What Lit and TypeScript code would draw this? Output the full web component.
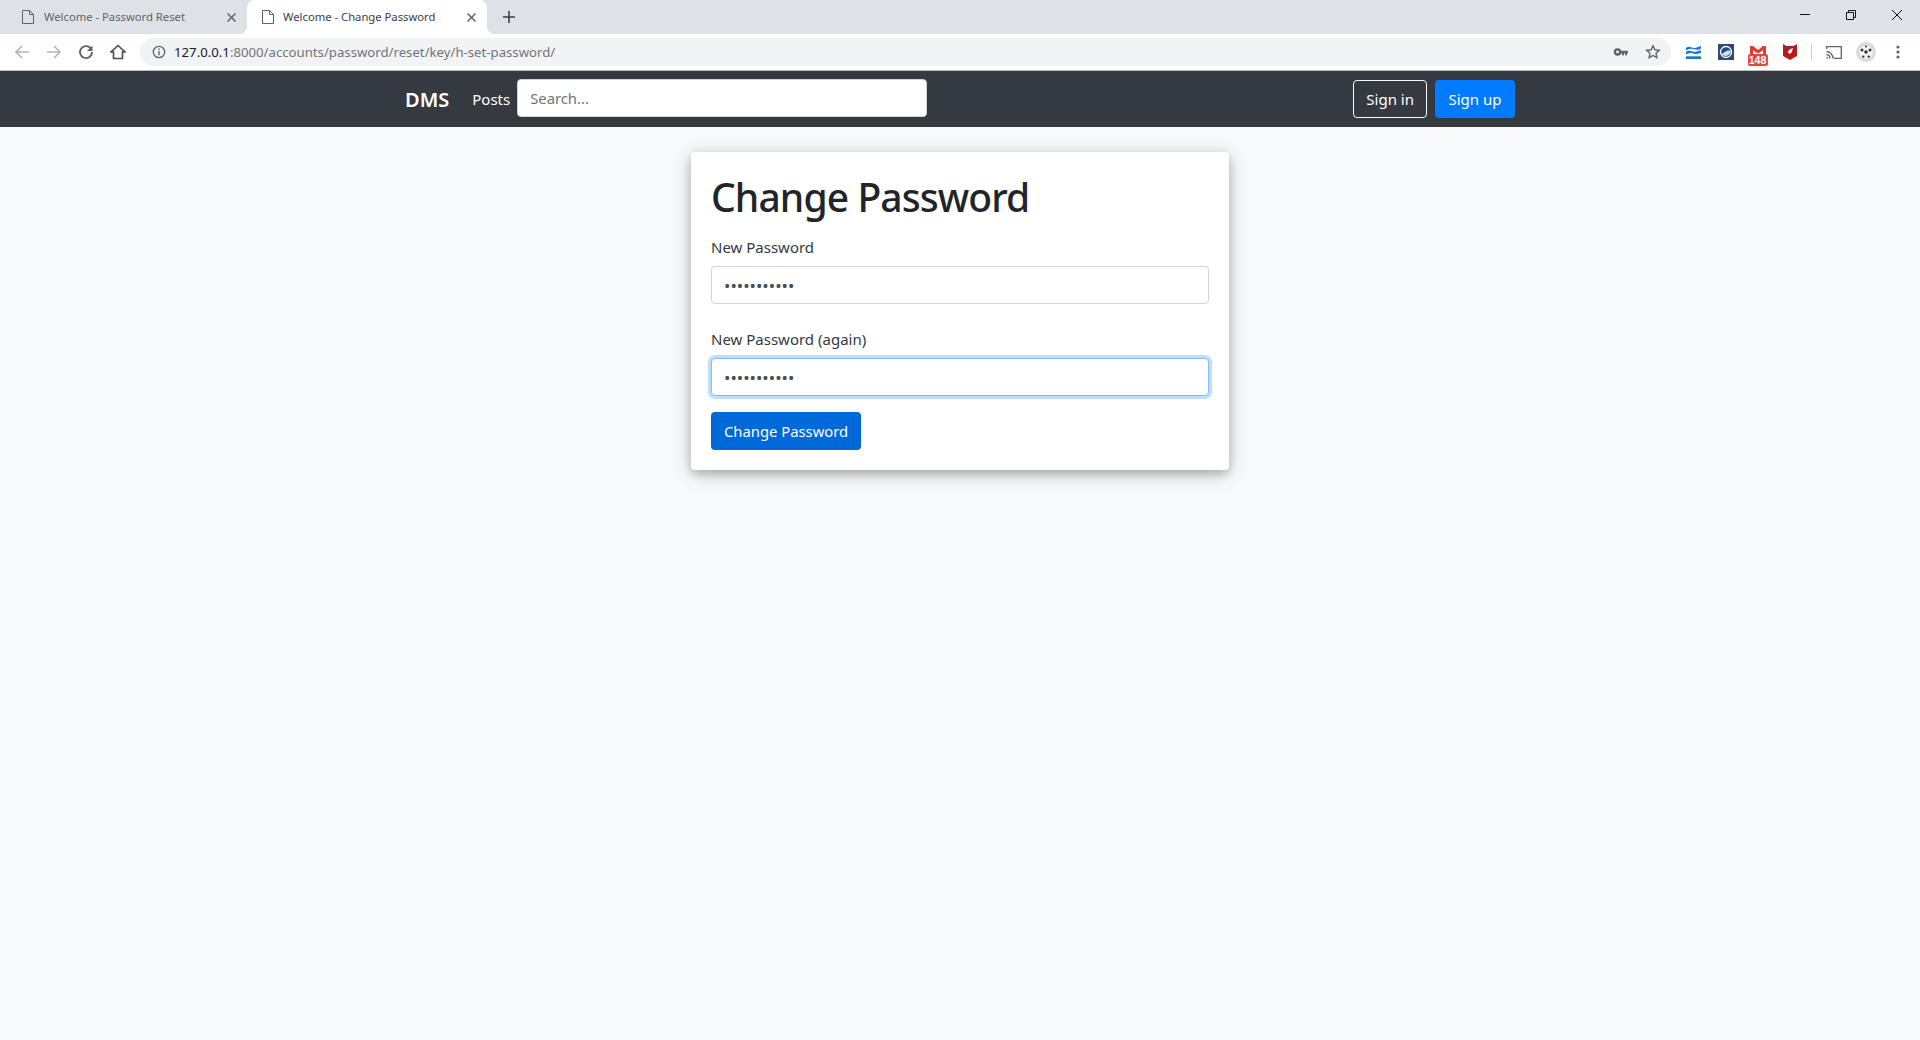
import { LitElement, html, css } from 'lit';
import { customElement } from 'lit/decorators.js';

const pageIcon = html`<svg class="page-icon" width="12" height="14" viewBox="0 0 12 14" fill="none" stroke="#5f6368" stroke-width="1"><path d="M.5.5h7l4 4v9h-11z"/><path d="M7.5.5v4h4"/></svg>`;
const closeIcon = html`<svg class="close-icon" width="9" height="9" viewBox="0 0 9 9" stroke="#5f6368" stroke-width="1.5"><path d="M.5.5l8 8M8.5.5l-8 8"/></svg>`;

@customElement('browser-chrome')
class BrowserChrome extends LitElement {
  static styles = css`
    :host {
      display: block;
      font-family: 'Noto Sans', 'Open Sans', sans-serif;
    }
    .strip {
      height: 34px;
      background: #dee1e6;
      display: flex;
      align-items: stretch;
    }
    .tab {
      width: 240px;
      display: flex;
      align-items: center;
      padding: 0 11px 0 15px;
      box-sizing: border-box;
      font-size: 11.25px;
      color: #5f6368;
      border-radius: 8px 8px 0 0;
      position: relative;
    }
    .tab.first {
      width: 247px;
      padding-left: 22px;
    }
    .tab.active {
      background: #fff;
      color: #3c4043;
    }
    .tab.active::before,
    .tab.active::after {
      content: '';
      position: absolute;
      bottom: 0;
      width: 8px;
      height: 8px;
    }
    .tab.active::before {
      left: -8px;
      background: radial-gradient(circle at 0 0, transparent 8px, #fff 8.5px);
    }
    .tab.active::after {
      right: -8px;
      background: radial-gradient(circle at 100% 0, transparent 8px, #fff 8.5px);
    }
    .tab .title {
      flex: 1;
      margin-left: 10px;
      white-space: nowrap;
    }
    .tab.active .title {
      margin-left: 9px;
    }
    .plus {
      margin-left: 16px;
      align-self: center;
      display: flex;
    }
    .spacer {
      flex: 1;
    }
    .win {
      width: 46px;
      display: flex;
      justify-content: center;
      padding-top: 9px;
      box-sizing: border-box;
    }
    .toolbar {
      height: 37px;
      background: #fff;
      border-bottom: 1px solid #b8babd;
      box-sizing: border-box;
      display: flex;
      align-items: center;
    }
    .nav-btn {
      width: 32px;
      display: flex;
      justify-content: center;
    }
    .nav-btns {
      display: flex;
      width: 140px;
      padding-left: 6px;
      box-sizing: border-box;
    }
    .omni {
      width: 1531px;
      height: 28px;
      border-radius: 14px;
      background: #f1f3f4;
      display: flex;
      align-items: center;
      padding: 0 10px 0 12px;
      box-sizing: border-box;
      font-size: 13.2px;
    }
    .url {
      margin-left: 8px;
      flex: 1;
      color: #70757a;
      white-space: nowrap;
    }
    .url b {
      font-weight: 400;
      color: #202124;
    }
    .omni .star {
      margin-left: 16px;
    }
    .exts {
      flex: 1;
      display: flex;
      align-items: center;
      padding-left: 6.5px;
    }
    .ext {
      width: 32px;
      height: 28px;
      display: flex;
      justify-content: center;
      align-items: center;
      position: relative;
    }
    .gmail {
      margin-bottom: 4px;
    }
    .badge {
      position: absolute;
      left: 6px;
      bottom: 0;
      width: 20px;
      height: 12px;
      border-radius: 2px;
      background: #e8453c;
      color: #fff;
      font: 700 10.5px/12px 'Liberation Sans', sans-serif;
      text-align: center;
    }
    .sep {
      width: 1px;
      height: 16px;
      background: #c9cbce;
      margin: 0 6px 0 5.5px;
    }
  `;

  render() {
    return html`
      <div class="strip">
        <div class="tab first">${pageIcon}<span class="title">Welcome - Password Reset</span>${closeIcon}</div>
        <div class="tab active">${pageIcon}<span class="title">Welcome - Change Password</span>${closeIcon}</div>
        <div class="plus">
          <svg width="12" height="12" viewBox="0 0 12 12" stroke="#3c4043" stroke-width="1.6"><path d="M6 0v12M0 6h12"/></svg>
        </div>
        <div class="spacer"></div>
        <div class="win"><svg width="12" height="12" viewBox="0 0 12 12" stroke="#111" stroke-width="1"><path d="M1 5.5h10"/></svg></div>
        <div class="win"><svg width="12" height="12" viewBox="0 0 12 12" fill="none" stroke="#111" stroke-width="1"><path d="M1.5 3.5h7v7h-7zM3.5 3.5v-2h7v7h-2"/></svg></div>
        <div class="win"><svg width="12" height="12" viewBox="0 0 12 12" stroke="#111" stroke-width="1"><path d="M1 1l10 10M11 1l-10 10"/></svg></div>
      </div>
      <div class="toolbar">
        <div class="nav-btns">
          <div class="nav-btn"><svg width="16" height="16" viewBox="0 0 16 16" fill="none" stroke="#b4b7ba" stroke-width="1.7"><path d="M15 8H2M8 2L2 8l6 6"/></svg></div>
          <div class="nav-btn"><svg width="16" height="16" viewBox="0 0 16 16" fill="none" stroke="#b4b7ba" stroke-width="1.7"><path d="M1 8h13M8 2l6 6-6 6"/></svg></div>
          <div class="nav-btn"><svg width="16" height="16" viewBox="0 0 16 16" fill="none" stroke="#5f6368" stroke-width="1.8"><path d="M13.4 5.5A6 6 0 1 0 14 8"/><path d="M14.5 1.5v5.500H9z" fill="#5f6368" stroke="none"/></svg></div>
          <div class="nav-btn"><svg width="16" height="16" viewBox="0 0 16 16" fill="none" stroke="#4a4d51" stroke-width="1.6"><path d="M8 1.500L1 8h2.500v6.500h9V8H15z"/></svg></div>
        </div>
        <div class="omni">
          <svg width="14" height="14" viewBox="0 0 14 14" fill="none"><circle cx="7" cy="7" r="5.7" stroke="#5f6368" stroke-width="1.3"/><path d="M7 6v4.200M7 3.600v1.400" stroke="#5f6368" stroke-width="1.4"/></svg>
          <span class="url"><b>127.0.0.1</b>:8000/accounts/password/reset/key/h-set-password/</span>
          <svg width="16" height="16" viewBox="0 0 16 16"><circle cx="4.500" cy="8" r="2.600" fill="none" stroke="#5f6368" stroke-width="2.400"/><path d="M7 6.800h8v2.400h-1v2h-2v-2h-1v2H9v-2H7z" fill="#5f6368"/></svg>
          <svg class="star" width="16" height="16" viewBox="0 0 16 16" fill="none" stroke="#5f6368" stroke-width="1.400"><path d="M8 1.800l1.900 4 4.400.5-3.300 3 .9 4.400L8 11.500l-3.900 2.200.9-4.400-3.300-3 4.400-.5z"/></svg>
        </div>
        <div class="exts">
          <div class="ext"><svg width="15" height="13" viewBox="0 0 15 13" fill="#1976d2"><path d="M0 2c1.500-1.500 3-1.500 5-.7s3 1 4.500.6S13 .8 15 0v2.400c-1.500 1-3.500 1.500-5.500 1.100S6 2.600 4.500 2.800 1.500 3.500 0 4.400z"/><path d="M0 5.800c1.500-1 3-1.300 5-.7s3 1 4.500.6 3.500-1 5.500-1.400v2.400c-1.500.5-3.500 1.400-5.500 1.200S6 6.900 4.500 7 1.500 7.600 0 8.200z"/><rect y="10.300" width="15" height="2.700"/></svg></div>
          <div class="ext"><svg width="16" height="16" viewBox="0 0 16 16"><rect width="16" height="16" fill="#2c4a7c"/><circle cx="8" cy="8" r="5.500" fill="none" stroke="#fff" stroke-width="1.300"/><path d="M3 9.800c2 0 3-1.300 4.500-2.300s3.200-1.400 5.300-.8A5.500 5.500 0 0 1 3 9.800z" fill="#cfe0f3"/></svg></div>
          <div class="ext"><svg class="gmail" width="16" height="8" viewBox="0 0 16 8"><rect width="16" height="8" fill="#f4f4f4"/><path d="M0 0h3l5 4 5-4h3v8h-3V4.200L8 7.600 3 4.200V8H0z" fill="#dd3b30"/></svg><span class="badge">148</span></div>
          <div class="ext"><svg width="14" height="16" viewBox="0 0 14 16"><path d="M0 0l3.500 2h7L14 0v12l-7 4-7-4z" fill="#b71c1c"/><path d="M10 4L6.500 5.500 4.500 8.300 6 8.700 6.300 10.200 8.800 8.300z" fill="#fff"/></svg></div>
          <div class="sep"></div>
          <div class="ext"><svg width="16" height="13" viewBox="0 0 16 13" fill="none" stroke="#5f6368" stroke-width="1.300"><path d="M.7 3V.7h14.600v11.600H8"/><path d="M.5 5.500a7 7 0 0 1 6.500 7M.5 8.500a4 4 0 0 1 3.500 4"/><circle cx="1.300" cy="11.800" r=".9" fill="#5f6368" stroke="none"/></svg></div>
          <div class="ext"><svg width="20" height="20" viewBox="0 0 20 20"><circle cx="10" cy="10" r="10" fill="#dcdcdc"/><circle cx="10" cy="10" r="6.500" fill="#f7f7f7"/><path d="M10 8l1.900 1.400-.7 2.200H8.800l-.7-2.200z" fill="#333"/><circle cx="6" cy="8" r="1.500" fill="#333"/><circle cx="14" cy="8" r="1.500" fill="#333"/><circle cx="7.300" cy="14.600" r="1.200" fill="#333"/><circle cx="12.700" cy="14.600" r="1.200" fill="#333"/><circle cx="10" cy="4.500" r="1" fill="#333"/></svg></div>
          <div class="ext"><svg width="4" height="14" viewBox="0 0 4 14" fill="#5f6368"><circle cx="2" cy="2" r="1.600"/><circle cx="2" cy="7" r="1.600"/><circle cx="2" cy="12" r="1.600"/></svg></div>
        </div>
      </div>
    `;
  }
}

@customElement('app-root')
class AppRoot extends LitElement {
  static styles = css`
    :host {
      display: block;
      min-height: 1040px;
      background: #f8f9fa;
      font-family: 'Noto Sans', 'Open Sans', sans-serif;
      color: #212529;
      font-size: 16px;
      line-height: 24px;
    }
    * {
      box-sizing: border-box;
    }
    .navbar {
      height: 56px;
      background: #343a40;
      display: flex;
      justify-content: center;
    }
    .container {
      width: 1140px;
      padding: 0 15px;
      display: flex;
      align-items: center;
    }
    .brand {
      font-size: 20px;
      line-height: 30px;
      padding-top: 2px;
      font-weight: 600;
      color: #fff;
      margin-right: 23px;
    }
    .link {
      color: #fff;
      font-size: 15px;
      margin-right: 7px;
    }
    .search {
      width: 410px;
      height: 38px;
      margin-bottom: 2px;
      border: 1px solid #ced4da;
      border-radius: 4px;
      padding: 0 12px;
      font: 14.8px 'Noto Sans', sans-serif;
    }
    .search::placeholder {
      color: #6c757d;
      opacity: 1;
    }
    .grow {
      flex: 1;
    }
    .btn {
      display: inline-block;
      height: 38px;
      line-height: 36px;
      padding: 0 12px;
      border: 1px solid transparent;
      border-radius: 4px;
      font-size: 15px;
      color: #fff;
      white-space: nowrap;
    }
    .btn.outline {
      border-color: #f8f9fa;
      margin-right: 8px;
    }
    .btn.blue {
      background: #007bff;
      padding: 0 12.5px;
    }
    .btn.submit {
      background: #0069d9;
      font-size: 14.8px;
    }
    main {
      display: flex;
      justify-content: center;
      padding-top: 25px;
    }
    .card {
      width: 538px;
      height: 318px;
      background: #fff;
      border-radius: 4px;
      padding: 20px;
      box-shadow: 0 4px 10px rgba(0, 0, 0, 0.2), 0 4px 20px rgba(0, 0, 0, 0.19);
    }
    h1 {
      margin: 0 0 14px;
      padding-top: 1px;
      font-size: 39px;
      line-height: 48px;
      font-weight: 500;
      letter-spacing: -0.9px;
    }
    label {
      display: block;
      font-size: 15px;
      color: #343a40;
      margin-bottom: 7px;
    }
    input.field {
      display: block;
      width: 100%;
      height: 38px;
      border: 1px solid #ced4da;
      border-radius: 4px;
      padding: 0 12px;
      color: #495057;
      font: 17px 'Noto Sans', sans-serif;
      margin-bottom: 23px;
      outline: none;
    }
    input.field.focus {
      border-color: #80bdff;
      box-shadow: 0 0 0 3px rgba(0, 123, 255, 0.25);
      margin-bottom: 16px;
    }
  `;

  render() {
    return html`
      <browser-chrome></browser-chrome>
      <nav class="navbar">
        <div class="container">
          <span class="brand">DMS</span>
          <span class="link">Posts</span>
          <input class="search" placeholder="Search..." />
          <span class="grow"></span>
          <span class="btn outline">Sign in</span>
          <span class="btn blue">Sign up</span>
        </div>
      </nav>
      <main>
        <div class="card">
          <h1>Change Password</h1>
          <label>New Password</label>
          <input class="field" type="password" value="..........." />
          <label>New Password (again)</label>
          <input class="field focus" type="password" value="..........." />
          <span class="btn submit">Change Password</span>
        </div>
      </main>
    `;
  }
}
